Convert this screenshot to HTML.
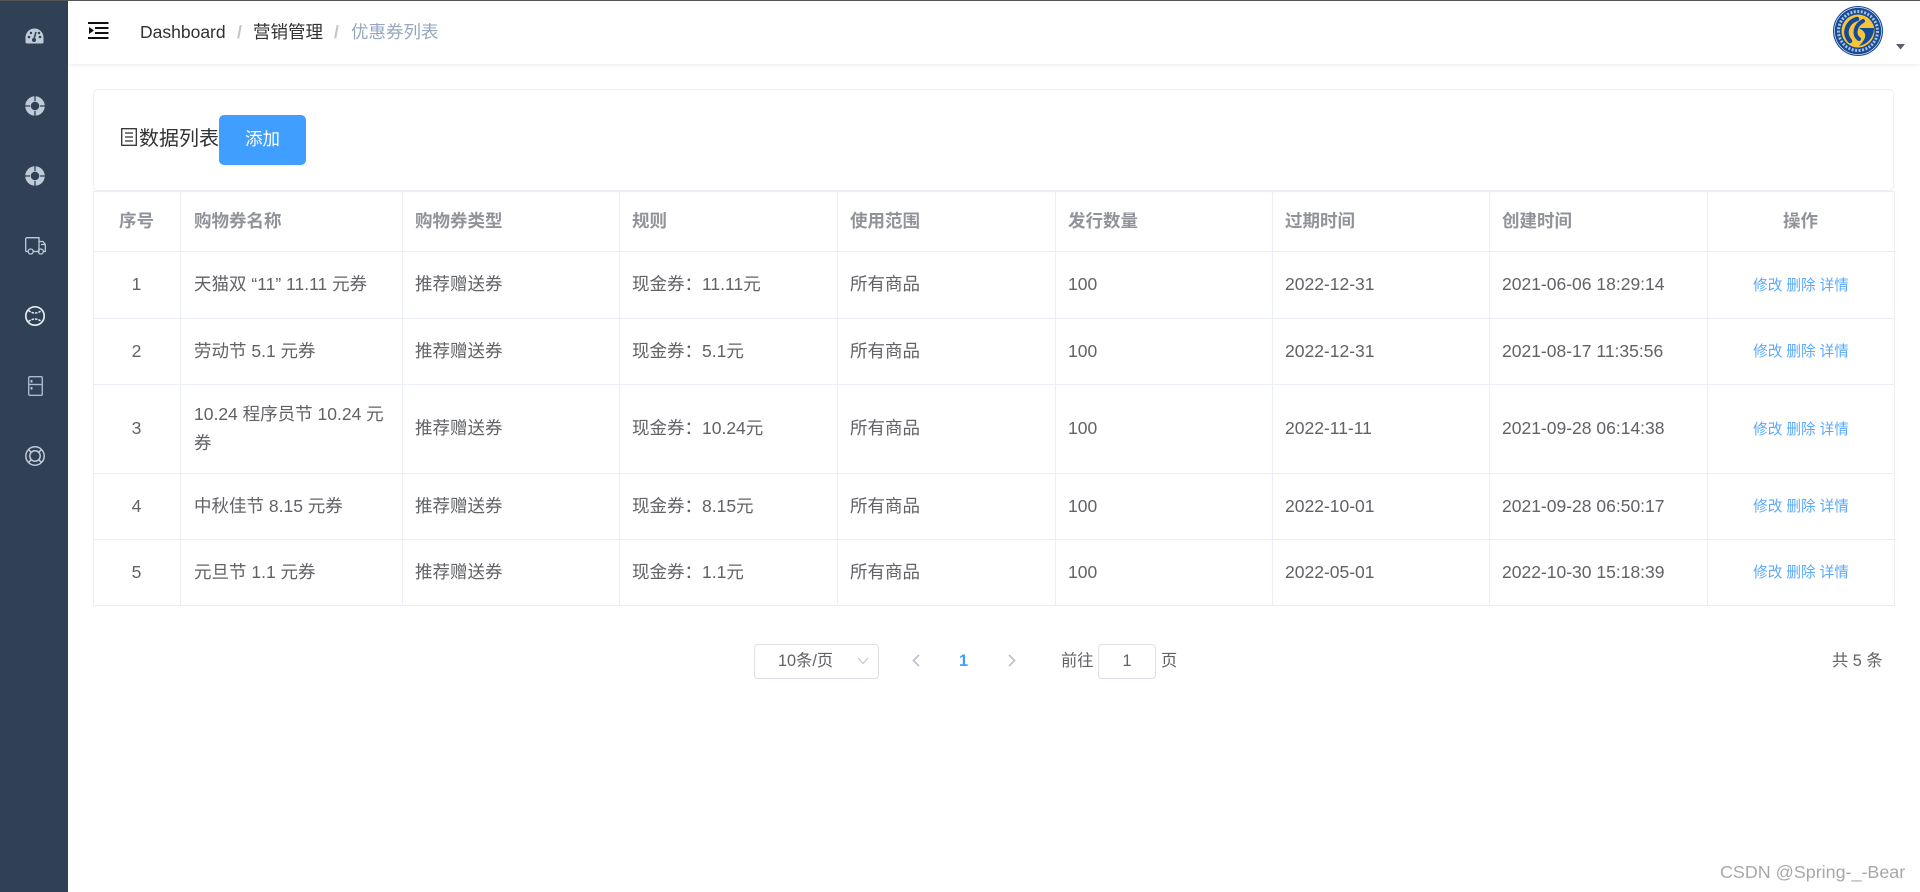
<!DOCTYPE html>
<html lang="zh-CN">
<head>
<meta charset="utf-8">
<title>优惠券列表</title>
<style>
html,body{margin:0;padding:0;width:1920px;height:892px;overflow:hidden;background:#fff}
body{font-family:"Liberation Sans","Noto Sans CJK SC",sans-serif;position:relative;color:#606266}
.abs{position:absolute;white-space:nowrap}
#top{position:absolute;left:0;top:0;width:1920px;height:1px;background:#555;z-index:5}
#side{position:absolute;left:0;top:0;width:68px;height:892px;background:#304156}
#side svg{position:absolute;overflow:visible}
#head{position:absolute;left:68px;top:0;width:1852px;height:64px;background:#fff;box-shadow:0 1px 4px rgba(0,21,41,.08)}
#card{position:absolute;left:93px;top:89px;width:1801px;height:102px;box-sizing:border-box;border:1px solid #ebeef5;border-radius:5px;box-shadow:0 1px 2px rgba(0,0,0,.03)}
#btn{position:absolute;left:219px;top:115px;width:87px;height:50px;background:#409eff;border-radius:5px;color:#fff;font-size:17.5px;line-height:48px;text-align:center}
table{position:absolute;left:93px;top:191px;width:1801px;border-collapse:collapse;table-layout:fixed;font-size:17.5px;color:#606266}
td,th{border:1px solid #ebeef5;padding:0 13px 1px 12px;box-sizing:border-box;line-height:29px;text-align:left;word-break:break-word}
td:nth-child(2),th:nth-child(2){padding-left:13px}
th{color:#909399;font-weight:700;height:60px}
.c{text-align:center}
.l{color:#5aa9fb;font-size:14.6px;text-align:center;padding:2px 0 0}
.pg{font-size:16.25px;color:#606266;line-height:35px}
.box{position:absolute;box-sizing:border-box;border:1px solid #dcdfe6;border-radius:4px;height:35px;top:644px}
</style>
</head>
<body>
<div id="top"></div>
<div id="side">
  <svg style="left:25px;top:28px" width="19" height="16" viewBox="0 0 19 16"><path fill="#bfcbd9" d="M9.5 0.5A9 9 0 0 0 0.5 9.5V14A1.5 1.5 0 0 0 2 15.5H17A1.5 1.5 0 0 0 18.500 14V9.500A9 9 0 0 0 9.500 0.500Z"/><circle cx="4" cy="9" r="1.300" fill="#304156"/><circle cx="6" cy="5" r="1.200" fill="#304156"/><circle cx="15" cy="9" r="1.300" fill="#304156"/><circle cx="14" cy="5" r="1.200" fill="#304156"/><path d="M11 4L9 11" stroke="#304156" stroke-width="1.500"/><circle cx="9" cy="12" r="2" fill="#304156"/></svg>
  <svg style="left:25px;top:96px" width="20" height="20" viewBox="0 0 20 20"><circle cx="10" cy="10" r="7" fill="none" stroke="#bfcbd9" stroke-width="5.500"/><path d="M10 0V5M10 15V20M0 10H5M15 10H20" stroke="#304156" stroke-width="1.300"/></svg>
  <svg style="left:25px;top:166px" width="20" height="20" viewBox="0 0 20 20"><circle cx="10" cy="10" r="7" fill="none" stroke="#bfcbd9" stroke-width="5.500"/><path d="M10 0V5M10 15V20M0 10H5M15 10H20" stroke="#304156" stroke-width="1.300"/></svg>
  <svg style="left:25px;top:237px" width="21" height="18" viewBox="0 0 21 18" fill="none" stroke="#bfcbd9" stroke-width="1.300"><path d="M3 14.500H1.500A1 1 0 0 1 0.700 13.500V2A1.300 1.300 0 0 1 2 0.700H14V14.500H8.500"/><path d="M14 4.500H18L20.300 7.500V14.500H18.800"/><path d="M14 14.500H13M16 7.500H20"/><circle cx="5.700" cy="14.500" r="2.500"/><circle cx="15.800" cy="14.500" r="2.500"/></svg>
  <svg style="left:25px;top:306px" width="20" height="20" viewBox="0 0 20 20" fill="none" stroke="#e4eaf2" stroke-width="1.700"><circle cx="10" cy="10" r="9.200"/><path d="M3.500 4.500Q10 9.500 16.500 4.500M3.500 15.500Q10 10.500 16.500 15.500" stroke-dasharray="2.500 1" stroke-width="1.500"/></svg>
  <svg style="left:28px;top:376px" width="15" height="20" viewBox="0 0 15 20" fill="none" stroke="#a8bbd0" stroke-width="1.400"><rect x="0.700" y="0.700" width="13.600" height="18.600" rx="1.200"/><path d="M0.700 8.500H14.300"/><path d="M3.500 4V6.500M3.500 11V13.500" stroke="#bfcbd9" stroke-width="1.800"/></svg>
  <svg style="left:25px;top:446px" width="20" height="20" viewBox="0 0 20 20" fill="none" stroke="#bfcbd9" stroke-width="1.500"><circle cx="10" cy="10" r="9.200"/><circle cx="10" cy="10" r="5.200"/><path d="M3.500 3.500L6.300 6.300M16.500 3.500L13.700 6.300M3.500 16.500L6.300 13.700M16.500 16.500L13.700 13.700"/></svg>
</div>
<div id="head"></div>
<svg class="abs" style="left:88px;top:21px" width="21" height="19" viewBox="0 0 21 19"><path d="M0 2H20.500M0 17H20.500M7 7H20.500M7 12H20.500" stroke="#111" stroke-width="2"/><path d="M1 6L6 9.500L1 13Z" fill="#111"/></svg>
<div class="abs" style="left:140px;top:20px;font-size:17.5px;line-height:24px;color:#303133">Dashboard</div>
<div class="abs" style="left:237px;top:20px;font-size:17.5px;line-height:24px;color:#c0c4cc;font-weight:700">/</div>
<div class="abs" style="left:253px;top:20px;font-size:17.5px;line-height:24px;color:#303133">营销管理</div>
<div class="abs" style="left:334px;top:20px;font-size:17.5px;line-height:24px;color:#c0c4cc;font-weight:700">/</div>
<div class="abs" style="left:351px;top:20px;font-size:17.5px;line-height:24px;color:#97a8be">优惠券列表</div>
<svg class="abs" style="left:1833px;top:6px" width="50" height="50" viewBox="0 0 50 50">
  <circle cx="25" cy="25" r="25" fill="#174a94"/>
  <circle cx="25" cy="25" r="23.500" fill="none" stroke="#dfe8f4" stroke-width=".7"/>
  <circle cx="25" cy="25" r="19.500" fill="none" stroke="#a9c0df" stroke-width="3" stroke-dasharray="2 1.500"/>
  <circle cx="25" cy="25" r="16.500" fill="#f6c53e"/>
  <g fill="none" stroke="#174a94" stroke-linecap="round">
    <path d="M24 13C14 16 10 27 17 35" stroke-width="4.500"/>
    <path d="M30 15C22 19 20 29 26 33" stroke-width="4"/>
  </g>
  <path d="M26 22L41 22C41 30 36 38 26 40C31 35 33 31 32 28C31 25 29 24 26 22Z" fill="#174a94"/>
</svg>
<svg class="abs" style="left:1896px;top:44px" width="9" height="6" viewBox="0 0 9 6"><path d="M0 0H9L4.500 5.500Z" fill="#5a5e66"/></svg>

<div id="card"></div>
<svg class="abs" style="left:121px;top:128px" width="16" height="18" viewBox="0 0 16 18" fill="none" stroke="#303133" stroke-width="1.300"><rect x="0.700" y="0.700" width="14.600" height="16.600"/><path d="M4 5H12M4 9H12M4 13H12"/></svg>
<div class="abs" style="left:139px;top:125px;font-size:20px;line-height:28px;color:#303133">数据列表</div>
<div id="btn">添加</div>

<table>
<colgroup><col style="width:87px"><col style="width:222px"><col style="width:217px"><col style="width:218px"><col style="width:218px"><col style="width:217px"><col style="width:217px"><col style="width:218px"><col style="width:187px"></colgroup>
<tr><th class="c">序号</th><th>购物券名称</th><th>购物券类型</th><th>规则</th><th>使用范围</th><th>发行数量</th><th>过期时间</th><th>创建时间</th><th class="c">操作</th></tr>
<tr style="height:67px"><td class="c">1</td><td>天猫双 “11” 11.11 元券</td><td>推荐赠送券</td><td>现金券：11.11元</td><td>所有商品</td><td>100</td><td>2022-12-31</td><td>2021-06-06 18:29:14</td><td class="l">修改 删除 详情</td></tr>
<tr style="height:66px"><td class="c">2</td><td>劳动节 5.1 元券</td><td>推荐赠送券</td><td>现金券：5.1元</td><td>所有商品</td><td>100</td><td>2022-12-31</td><td>2021-08-17 11:35:56</td><td class="l">修改 删除 详情</td></tr>
<tr style="height:89px"><td class="c">3</td><td>10.24 程序员节 10.24 元券</td><td>推荐赠送券</td><td>现金券：10.24元</td><td>所有商品</td><td>100</td><td>2022-11-11</td><td>2021-09-28 06:14:38</td><td class="l">修改 删除 详情</td></tr>
<tr style="height:66px"><td class="c">4</td><td>中秋佳节 8.15 元券</td><td>推荐赠送券</td><td>现金券：8.15元</td><td>所有商品</td><td>100</td><td>2022-10-01</td><td>2021-09-28 06:50:17</td><td class="l">修改 删除 详情</td></tr>
<tr style="height:66px"><td class="c">5</td><td>元旦节 1.1 元券</td><td>推荐赠送券</td><td>现金券：1.1元</td><td>所有商品</td><td>100</td><td>2022-05-01</td><td>2022-10-30 15:18:39</td><td class="l">修改 删除 详情</td></tr>
</table>

<div class="box" style="left:754px;width:125px"></div>
<div class="abs pg" style="left:778px;top:644px">10条/页</div>
<svg class="abs" style="left:857px;top:657px" width="12" height="8" viewBox="0 0 12 8"><path d="M1 1L6 6.500L11 1" fill="none" stroke="#c0c4cc" stroke-width="1.100"/></svg>
<svg class="abs" style="left:911px;top:654px" width="10" height="13" viewBox="0 0 10 13"><path d="M8 1L2.500 6.500L8 12" fill="none" stroke="#c0c4cc" stroke-width="1.900"/></svg>
<div class="abs pg" style="left:959px;top:644px;color:#409eff;font-weight:700">1</div>
<svg class="abs" style="left:1007px;top:654px" width="10" height="13" viewBox="0 0 10 13"><path d="M2 1L7.500 6.500L2 12" fill="none" stroke="#c0c4cc" stroke-width="1.900"/></svg>
<div class="abs pg" style="left:1061px;top:644px">前往</div>
<div class="box" style="left:1098px;width:58px"></div>
<div class="abs pg" style="left:1098px;width:58px;text-align:center;top:644px">1</div>
<div class="abs pg" style="left:1161px;top:644px">页</div>
<div class="abs pg" style="left:1832px;top:644px">共 5 条</div>
<div class="abs" style="left:1720px;top:860px;font-size:17.900px;line-height:24px;color:#a8a8a8">CSDN @Spring-_-Bear</div>
</body>
</html>
